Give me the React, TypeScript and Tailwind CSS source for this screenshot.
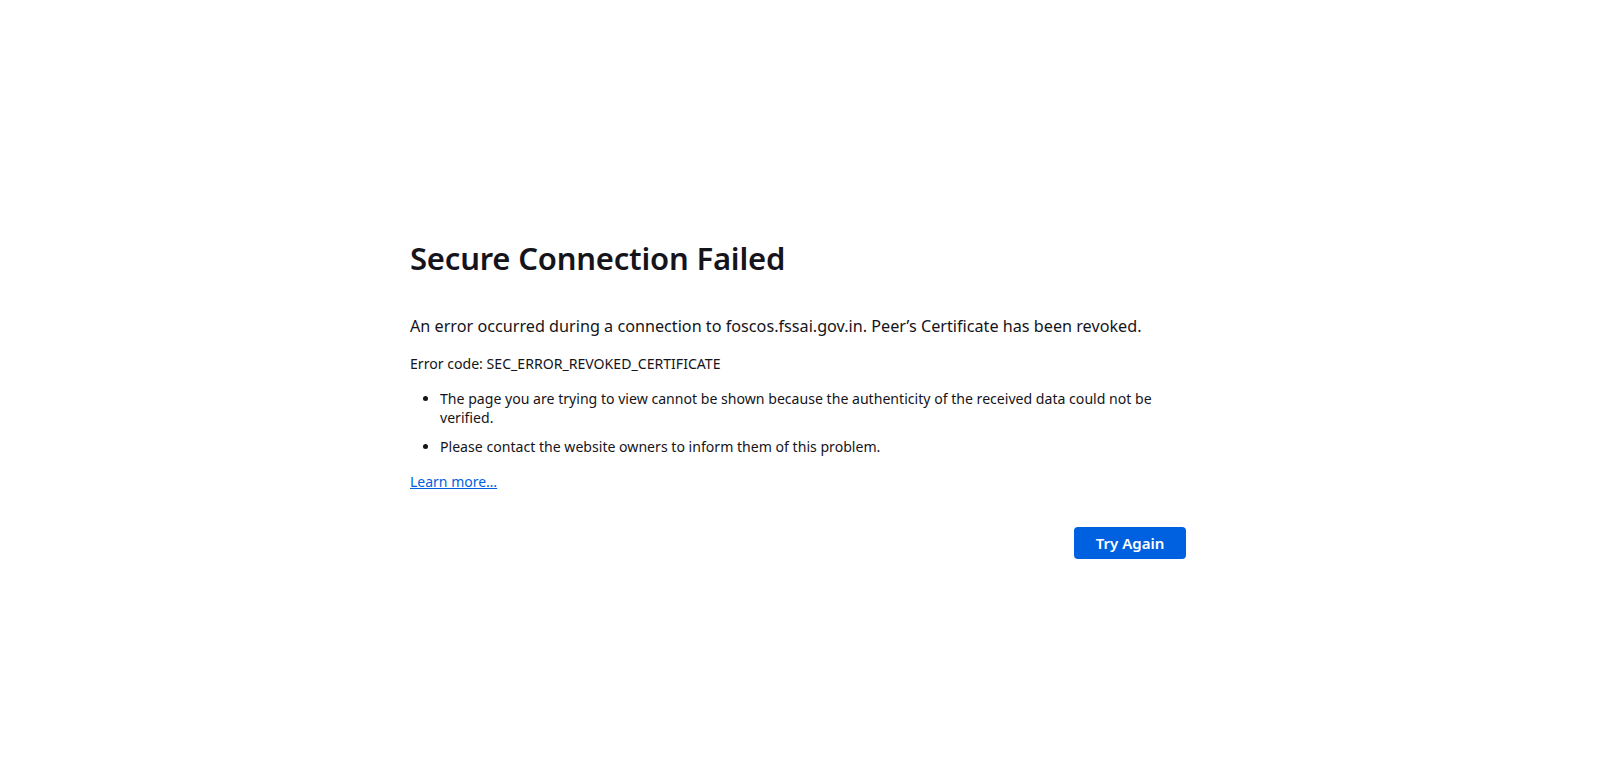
import React from "react";

export default function App() {
  return (
    <div
      className="w-full h-screen overflow-hidden bg-white flex justify-center text-[#15141a]"
      style={{ fontFamily: '"Noto Sans", "Open Sans", sans-serif' }}
    >
      <div className="w-[780px] pt-[236px]">
        <h1 className="text-[31px] leading-[44px] font-semibold tracking-[-0.2px]">
          Secure Connection Failed
        </h1>
        <p className="mt-[34px] text-[16.2px] leading-[24px]">
          An error occurred during a connection to foscos.fssai.gov.in. Peer’s Certificate has been revoked.
        </p>
        <p className="mt-[16px] text-[14.1px] leading-[20px]">
          Error code: SEC_ERROR_REVOKED_CERTIFICATE
        </p>
        <ul className="mt-[15px] pl-[30px] list-disc text-[14.1px] leading-[19px]">
          <li className="mb-[10px]">
            The page you are trying to view cannot be shown because the authenticity of the received data could not be verified.
          </li>
          <li>Please contact the website owners to inform them of this problem.</li>
        </ul>
        <a href="#" className="block mt-[16px] text-[14px] leading-[20px] text-[#0061e0] underline w-fit">
          Learn more…
        </a>
        <div className="flex justify-end mt-[35px] pr-[4px]">
          <button className="w-[112px] h-[32px] rounded-[4px] bg-[#0061e0] text-white text-[15px] font-semibold">
            Try Again
          </button>
        </div>
      </div>
    </div>
  );
}
